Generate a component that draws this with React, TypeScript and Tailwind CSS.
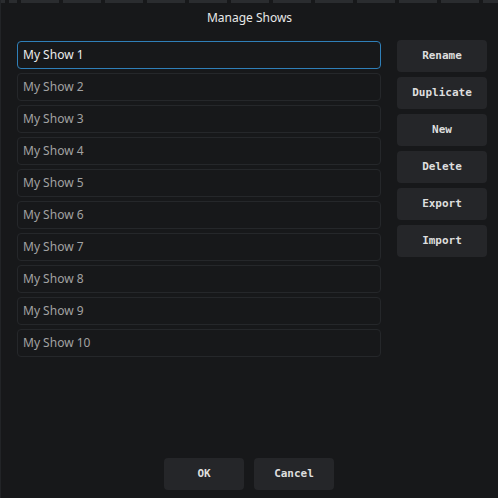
const shows = Array.from({ length: 10 }, (_, i) => `My Show ${i + 1}`);
const actions = ["Rename", "Duplicate", "New", "Delete", "Export", "Import"];

function ActionButton({ label, wide }: { label: string; wide?: boolean }) {
  return (
    <button
      className={`${wide ? "w-[90px]" : "w-[80px]"} h-[32px] rounded-[4px] bg-[#252629] text-[11px] font-bold text-[#dedede] font-['DejaVu_Sans_Mono',monospace] hover:bg-[#2e3034]`}
    >
      {label}
    </button>
  );
}

export default function App() {
  return (
    <div className="w-[498px] h-[498px] bg-[#17181a] border-l border-[#222427] flex flex-col font-['Noto_Sans',sans-serif] overflow-hidden">
      {/* strip along the top edge */}
      <div className="h-[3px] flex gap-[4px] bg-[#17181a]">
        <div className="w-[4px] bg-[#2a2c2f]" />
        <div className="w-[8px] bg-[#2a2c2f]" />
        {Array.from({ length: 11 }, (_, i) => (
          <div key={i} className="w-[38px] bg-[#2a2c2f]" />
        ))}
        <div className="flex-1 bg-[#2a2c2f]" />
      </div>
      <div className="h-[30px] flex items-center justify-center text-[12px] text-[#e8e8e8]">
        Manage Shows
      </div>
      <div className="flex flex-1 pl-[16px] pt-[8px] gap-[16px]">
        <div className="w-[364px] flex flex-col gap-[4px]">
          {shows.map((s, i) => (
            <div
              key={s}
              className={`h-[28px] rounded-[4px] border flex items-center px-[5px] text-[12px] ${
                i === 0
                  ? "border-[#2f7fb8] text-[#ececec]"
                  : "border-[#25272a] text-[#a2a2a2]"
              }`}
            >
              {s}
            </div>
          ))}
        </div>
        <div className="flex flex-col gap-[5px] -mt-[1px]">
          {actions.map((a) => (
            <ActionButton key={a} label={a} wide />
          ))}
        </div>
      </div>
      <div className="flex justify-center gap-[10px] pb-[8px] pr-[1px]">
        <ActionButton label="OK" />
        <ActionButton label="Cancel" />
      </div>
    </div>
  );
}
